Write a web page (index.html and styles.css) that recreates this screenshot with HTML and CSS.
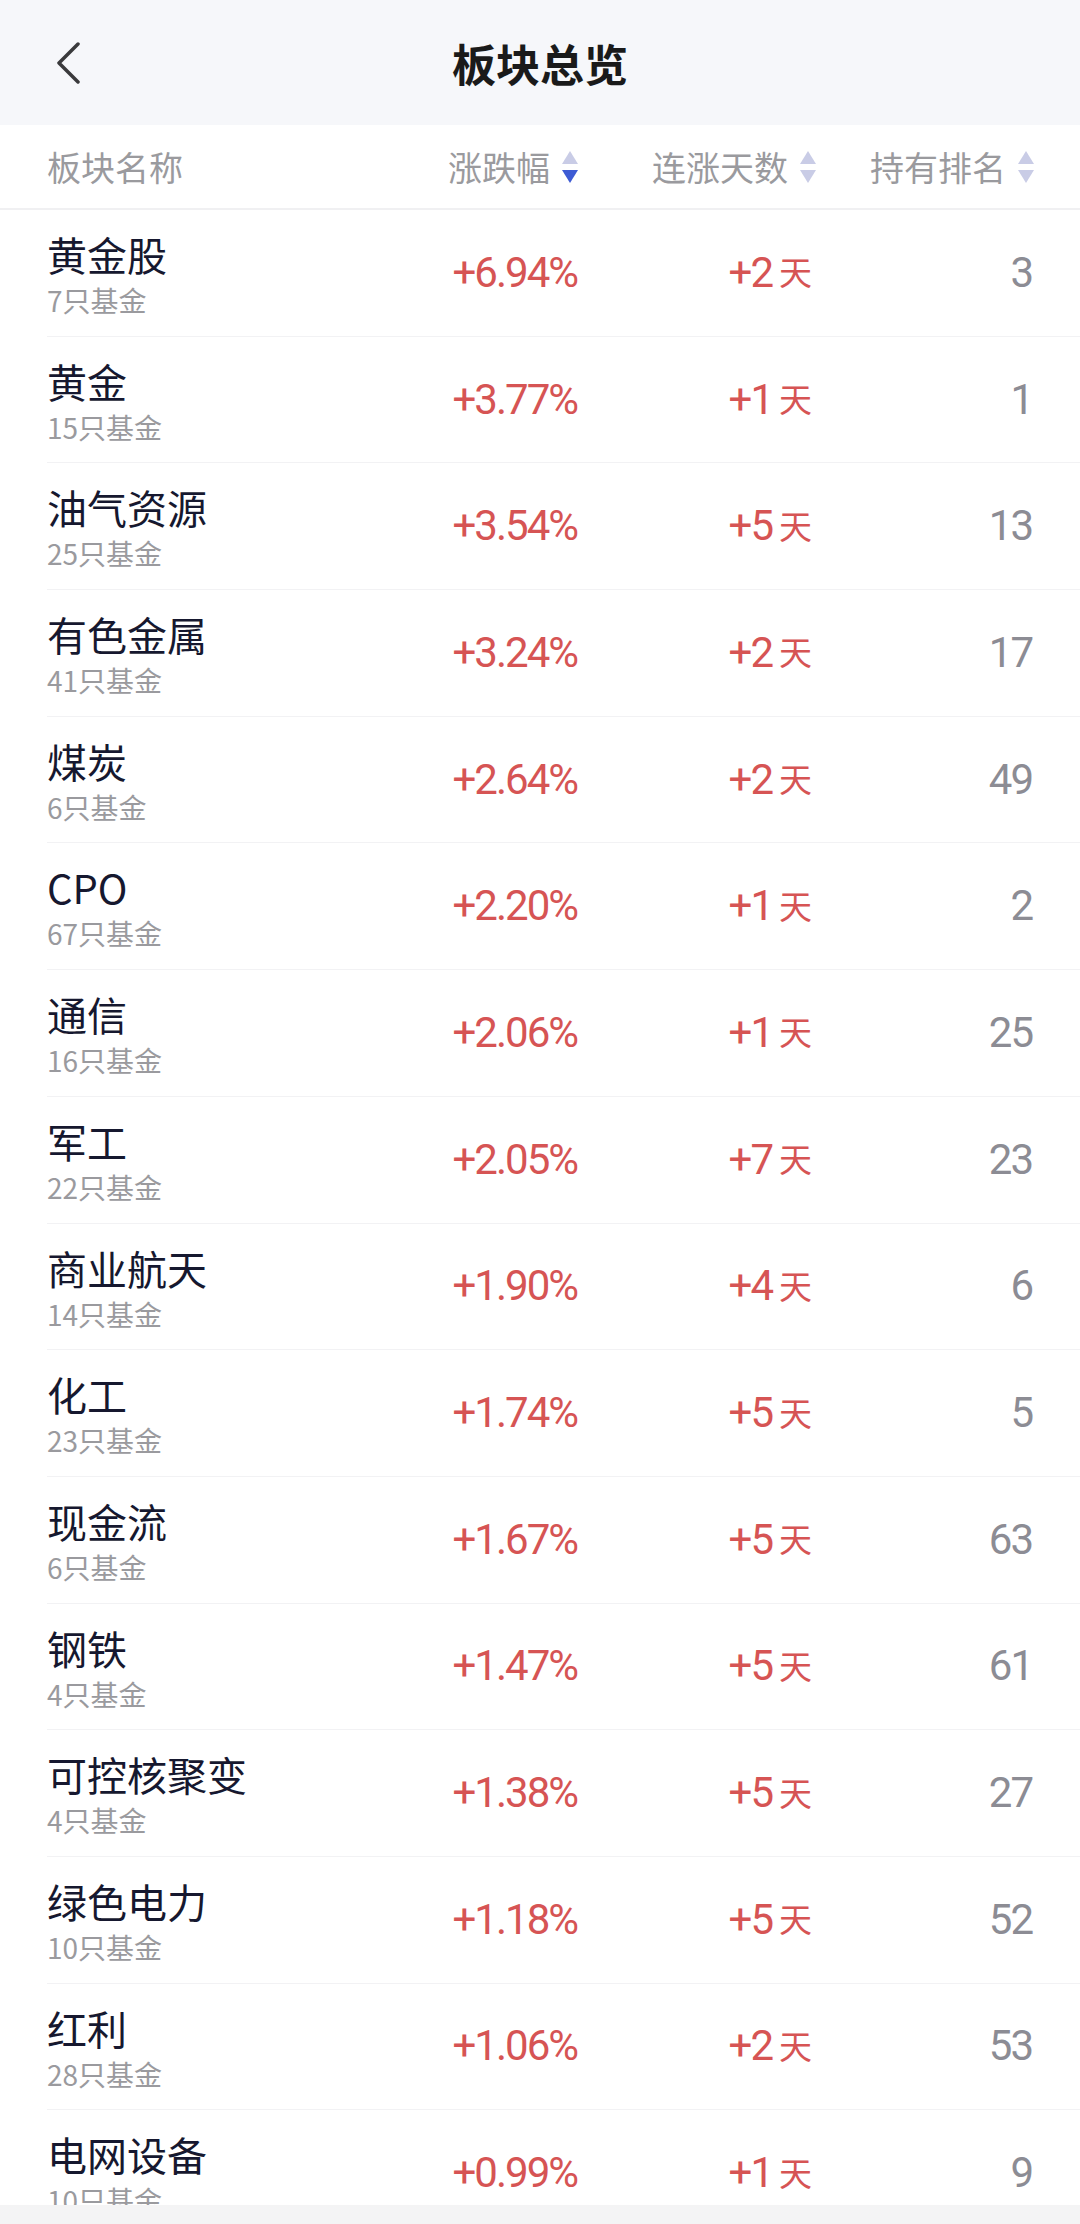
FILE: index.html
```html
<!DOCTYPE html>
<html>
  <head>
    <meta charset="utf-8">
    <title>板块总览</title>
    <link rel="stylesheet" href="styles.css">
  </head>
  <body>
    <div class="page">
      <header class="nav">
        <div class="nav-left">
          <svg class="back" width="26" height="42" viewBox="0 0 26 42">
            <path d="M22 2 L3 21 L22 40" fill="none" stroke="#3a3a3c" stroke-width="3.5" stroke-linecap="round" stroke-linejoin="round"/>
          </svg>
        </div>
        <h1 class="nav-title">板块总览</h1>
        <div class="nav-right"></div>
      </header>

      <div class="table-head">
        <span class="th th-name">板块名称</span>
        <span class="th">涨跌幅
          <svg class="sort" width="16" height="32" viewBox="0 0 16 32">
            <path d="M8 0 L16 13 L0 13 Z" fill="#c9cce6"/>
            <path d="M0 19 L16 19 L8 32 Z" fill="#3d5bd4"/>
          </svg>
        </span>
        <span class="th">连涨天数
          <svg class="sort" width="16" height="32" viewBox="0 0 16 32">
            <path d="M8 0 L16 13 L0 13 Z" fill="#c9cce6"/>
            <path d="M0 19 L16 19 L8 32 Z" fill="#c9cce6"/>
          </svg>
        </span>
        <span class="th">持有排名
          <svg class="sort" width="16" height="32" viewBox="0 0 16 32">
            <path d="M8 0 L16 13 L0 13 Z" fill="#c9cce6"/>
            <path d="M0 19 L16 19 L8 32 Z" fill="#c9cce6"/>
          </svg>
        </span>
      </div>

      <ul class="list">
        <li class="row">
          <div class="name-cell"><div class="name">黄金股</div><div class="count">7只基金</div></div>
          <div class="rate">+6.94%</div>
          <div class="days">+2<span class="unit">天</span></div>
          <div class="rank">3</div>
        </li>
        <li class="row">
          <div class="name-cell"><div class="name">黄金</div><div class="count">15只基金</div></div>
          <div class="rate">+3.77%</div>
          <div class="days">+1<span class="unit">天</span></div>
          <div class="rank">1</div>
        </li>
        <li class="row">
          <div class="name-cell"><div class="name">油气资源</div><div class="count">25只基金</div></div>
          <div class="rate">+3.54%</div>
          <div class="days">+5<span class="unit">天</span></div>
          <div class="rank">13</div>
        </li>
        <li class="row">
          <div class="name-cell"><div class="name">有色金属</div><div class="count">41只基金</div></div>
          <div class="rate">+3.24%</div>
          <div class="days">+2<span class="unit">天</span></div>
          <div class="rank">17</div>
        </li>
        <li class="row">
          <div class="name-cell"><div class="name">煤炭</div><div class="count">6只基金</div></div>
          <div class="rate">+2.64%</div>
          <div class="days">+2<span class="unit">天</span></div>
          <div class="rank">49</div>
        </li>
        <li class="row">
          <div class="name-cell"><div class="name">CPO</div><div class="count">67只基金</div></div>
          <div class="rate">+2.20%</div>
          <div class="days">+1<span class="unit">天</span></div>
          <div class="rank">2</div>
        </li>
        <li class="row">
          <div class="name-cell"><div class="name">通信</div><div class="count">16只基金</div></div>
          <div class="rate">+2.06%</div>
          <div class="days">+1<span class="unit">天</span></div>
          <div class="rank">25</div>
        </li>
        <li class="row">
          <div class="name-cell"><div class="name">军工</div><div class="count">22只基金</div></div>
          <div class="rate">+2.05%</div>
          <div class="days">+7<span class="unit">天</span></div>
          <div class="rank">23</div>
        </li>
        <li class="row">
          <div class="name-cell"><div class="name">商业航天</div><div class="count">14只基金</div></div>
          <div class="rate">+1.90%</div>
          <div class="days">+4<span class="unit">天</span></div>
          <div class="rank">6</div>
        </li>
        <li class="row">
          <div class="name-cell"><div class="name">化工</div><div class="count">23只基金</div></div>
          <div class="rate">+1.74%</div>
          <div class="days">+5<span class="unit">天</span></div>
          <div class="rank">5</div>
        </li>
        <li class="row">
          <div class="name-cell"><div class="name">现金流</div><div class="count">6只基金</div></div>
          <div class="rate">+1.67%</div>
          <div class="days">+5<span class="unit">天</span></div>
          <div class="rank">63</div>
        </li>
        <li class="row">
          <div class="name-cell"><div class="name">钢铁</div><div class="count">4只基金</div></div>
          <div class="rate">+1.47%</div>
          <div class="days">+5<span class="unit">天</span></div>
          <div class="rank">61</div>
        </li>
        <li class="row">
          <div class="name-cell"><div class="name">可控核聚变</div><div class="count">4只基金</div></div>
          <div class="rate">+1.38%</div>
          <div class="days">+5<span class="unit">天</span></div>
          <div class="rank">27</div>
        </li>
        <li class="row">
          <div class="name-cell"><div class="name">绿色电力</div><div class="count">10只基金</div></div>
          <div class="rate">+1.18%</div>
          <div class="days">+5<span class="unit">天</span></div>
          <div class="rank">52</div>
        </li>
        <li class="row">
          <div class="name-cell"><div class="name">红利</div><div class="count">28只基金</div></div>
          <div class="rate">+1.06%</div>
          <div class="days">+2<span class="unit">天</span></div>
          <div class="rank">53</div>
        </li>
        <li class="row">
          <div class="name-cell"><div class="name">电网设备</div><div class="count">10只基金</div></div>
          <div class="rate">+0.99%</div>
          <div class="days">+1<span class="unit">天</span></div>
          <div class="rank">9</div>
        </li>
      </ul>

      <div class="bottom-bar"></div>
    </div>
  </body>
</html>
```

FILE: styles.css
```css
* {
  box-sizing: border-box;
}

body {
  margin: 0;
  background: #fff;
  font-family: "Noto Sans CJK SC", "Noto Sans", sans-serif;
}

.page {
  height: 2224px;
  display: flex;
  flex-direction: column;
  overflow: hidden;
}

/* top bar */
.nav {
  height: 125px;
  flex-shrink: 0;
  background: #f6f7fa;
  display: grid;
  grid-template-columns: 1fr auto 1fr;
  align-items: center;
}

.nav-left {
  padding-left: 56px;
  display: flex;
  align-items: center;
}

.nav-title {
  margin: 0;
  font-size: 44px;
  font-weight: 700;
  color: #1a1a1a;
  line-height: 1;
}

/* column headers */
.table-head {
  height: 85px;
  flex-shrink: 0;
  display: grid;
  grid-template-columns: 1fr 160px 238px 218px;
  align-items: center;
  padding: 0 46px 0 47px;
  border-bottom: 2px solid #f0f0f2;
}

.th {
  display: flex;
  align-items: center;
  justify-content: flex-end;
  gap: 12px;
  font-size: 34px;
  color: #9a9a9e;
  white-space: nowrap;
}

.th-name {
  justify-content: flex-start;
}

.sort {
  flex-shrink: 0;
}

/* rows */
.list {
  flex: 1;
  margin: 0;
  padding: 0;
  list-style: none;
  overflow: hidden;
}

.row {
  height: 126.7px;
  margin-left: 47px;
  padding-right: 46px;
  display: grid;
  grid-template-columns: 1fr 160px 238px 218px;
  align-items: center;
  border-bottom: 1.5px solid #f2f2f4;
}

.name-cell {
  align-self: start;
  padding-top: 20px;
}

.name {
  font-size: 40px;
  line-height: 48px;
  color: #16182f;
}

.count {
  font-size: 28px;
  line-height: 44px;
  color: #9a9a9e;
}

.rate,
.days,
.rank {
  text-align: right;
  font-family: Roboto, "Noto Sans", sans-serif;
  font-size: 42px;
  letter-spacing: -2px;
  line-height: 1;
}

.rate {
  color: #d65454;
  padding-right: 1px;
}

.days {
  display: flex;
  justify-content: flex-end;
  align-items: center;
  color: #d65454;
  padding-right: 4px;
}

.unit {
  font-family: "Noto Sans CJK SC", sans-serif;
  font-size: 33px;
  line-height: 1;
  letter-spacing: 0;
  margin-left: 7px;
  position: relative;
  top: -1px;
}

.rank {
  color: #8c8c94;
  padding-right: 2px;
}

.bottom-bar {
  height: 19px;
  flex-shrink: 0;
  background: #f4f4f5;
}
```
